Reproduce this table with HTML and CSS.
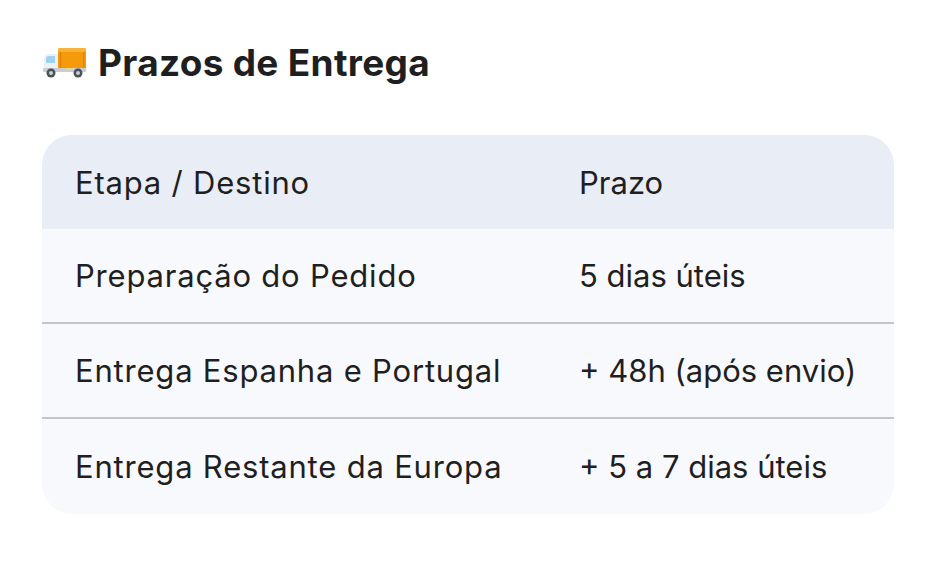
FILE: index.html
```html
<!DOCTYPE html>
<html lang="pt">
<head>
<meta charset="utf-8">
<link rel="stylesheet" href="styles.css">
</head>
<body>
<div class="page">
  <h2 class="title">
    <svg class="truck" viewBox="0 0 44 30" width="44" height="30" aria-hidden="true">
      <rect x="16" y="0" width="28" height="23" rx="2" fill="#f59a0b"/>
      <rect x="16" y="0" width="28" height="4" rx="2" fill="#fbb23a"/>
      <rect x="18" y="4" width="1.2" height="17" fill="#e08300"/>
      <rect x="41" y="4" width="1.2" height="17" fill="#e08300"/>
      <path d="M2 10 Q3 6 7 6 H16 V24 H2 Z" fill="#eef1f4"/>
      <path d="M4 10 Q4.5 8 7 8 H13 V15 H4 Z" fill="#9fd2f0"/>
      <rect x="1" y="20" width="43" height="4" rx="1" fill="#c9ced4"/>
      <rect x="24" y="20" width="8" height="1.6" fill="#fbd38a"/>
      <circle cx="9" cy="25" r="4.5" fill="#4a5158"/>
      <circle cx="9" cy="25" r="2" fill="#c9ced4"/>
      <circle cx="36" cy="25" r="4.5" fill="#4a5158"/>
      <circle cx="36" cy="25" r="2" fill="#c9ced4"/>
    </svg>
    <span>Prazos de Entrega</span>
  </h2>
  <div class="table">
    <div class="row head">
      <div class="cell">Etapa / Destino</div>
      <div class="cell">Prazo</div>
    </div>
    <div class="row">
      <div class="cell">Preparação do Pedido</div>
      <div class="cell">5 dias úteis</div>
    </div>
    <div class="row">
      <div class="cell">Entrega Espanha e Portugal</div>
      <div class="cell">+ 48h (após envio)</div>
    </div>
    <div class="row last">
      <div class="cell">Entrega Restante da Europa</div>
      <div class="cell">+ 5 a 7 dias úteis</div>
    </div>
  </div>
</div>
</body>
</html>
```
FILE: styles.css
```css
html, body {
  margin: 0;
  padding: 0;
  background: #ffffff;
}
body {
  font-family: "Inter", "Noto Sans", sans-serif;
  color: #1f1f1f;
}
.page {
  padding: 40px 38px 0 42px;
}
.title {
  margin: 0;
  display: flex;
  align-items: center;
  gap: 12px;
  height: 44px;
  font-size: 37px;
  font-weight: 700;
  letter-spacing: 0.3px;
}
.truck {
  flex: none;
  margin-top: 2px;
}
.table {
  margin-top: 51px;
  width: 852px;
  border-radius: 30px;
  overflow: hidden;
  background: #f8f9fd;
}
.row {
  display: grid;
  grid-template-columns: 504px 1fr;
  height: 93px;
  align-items: center;
  border-bottom: 2px solid #c4c5c7;
  font-size: 31px;
}
.row.head {
  background: #e9edf6;
  border-bottom: none;
  height: 94px;
}
.row.last {
  border-bottom: none;
  height: 95px;
}
.cell {
  padding-left: 33px;
}
.cell:first-child {
  letter-spacing: 0.8px;
}
```
